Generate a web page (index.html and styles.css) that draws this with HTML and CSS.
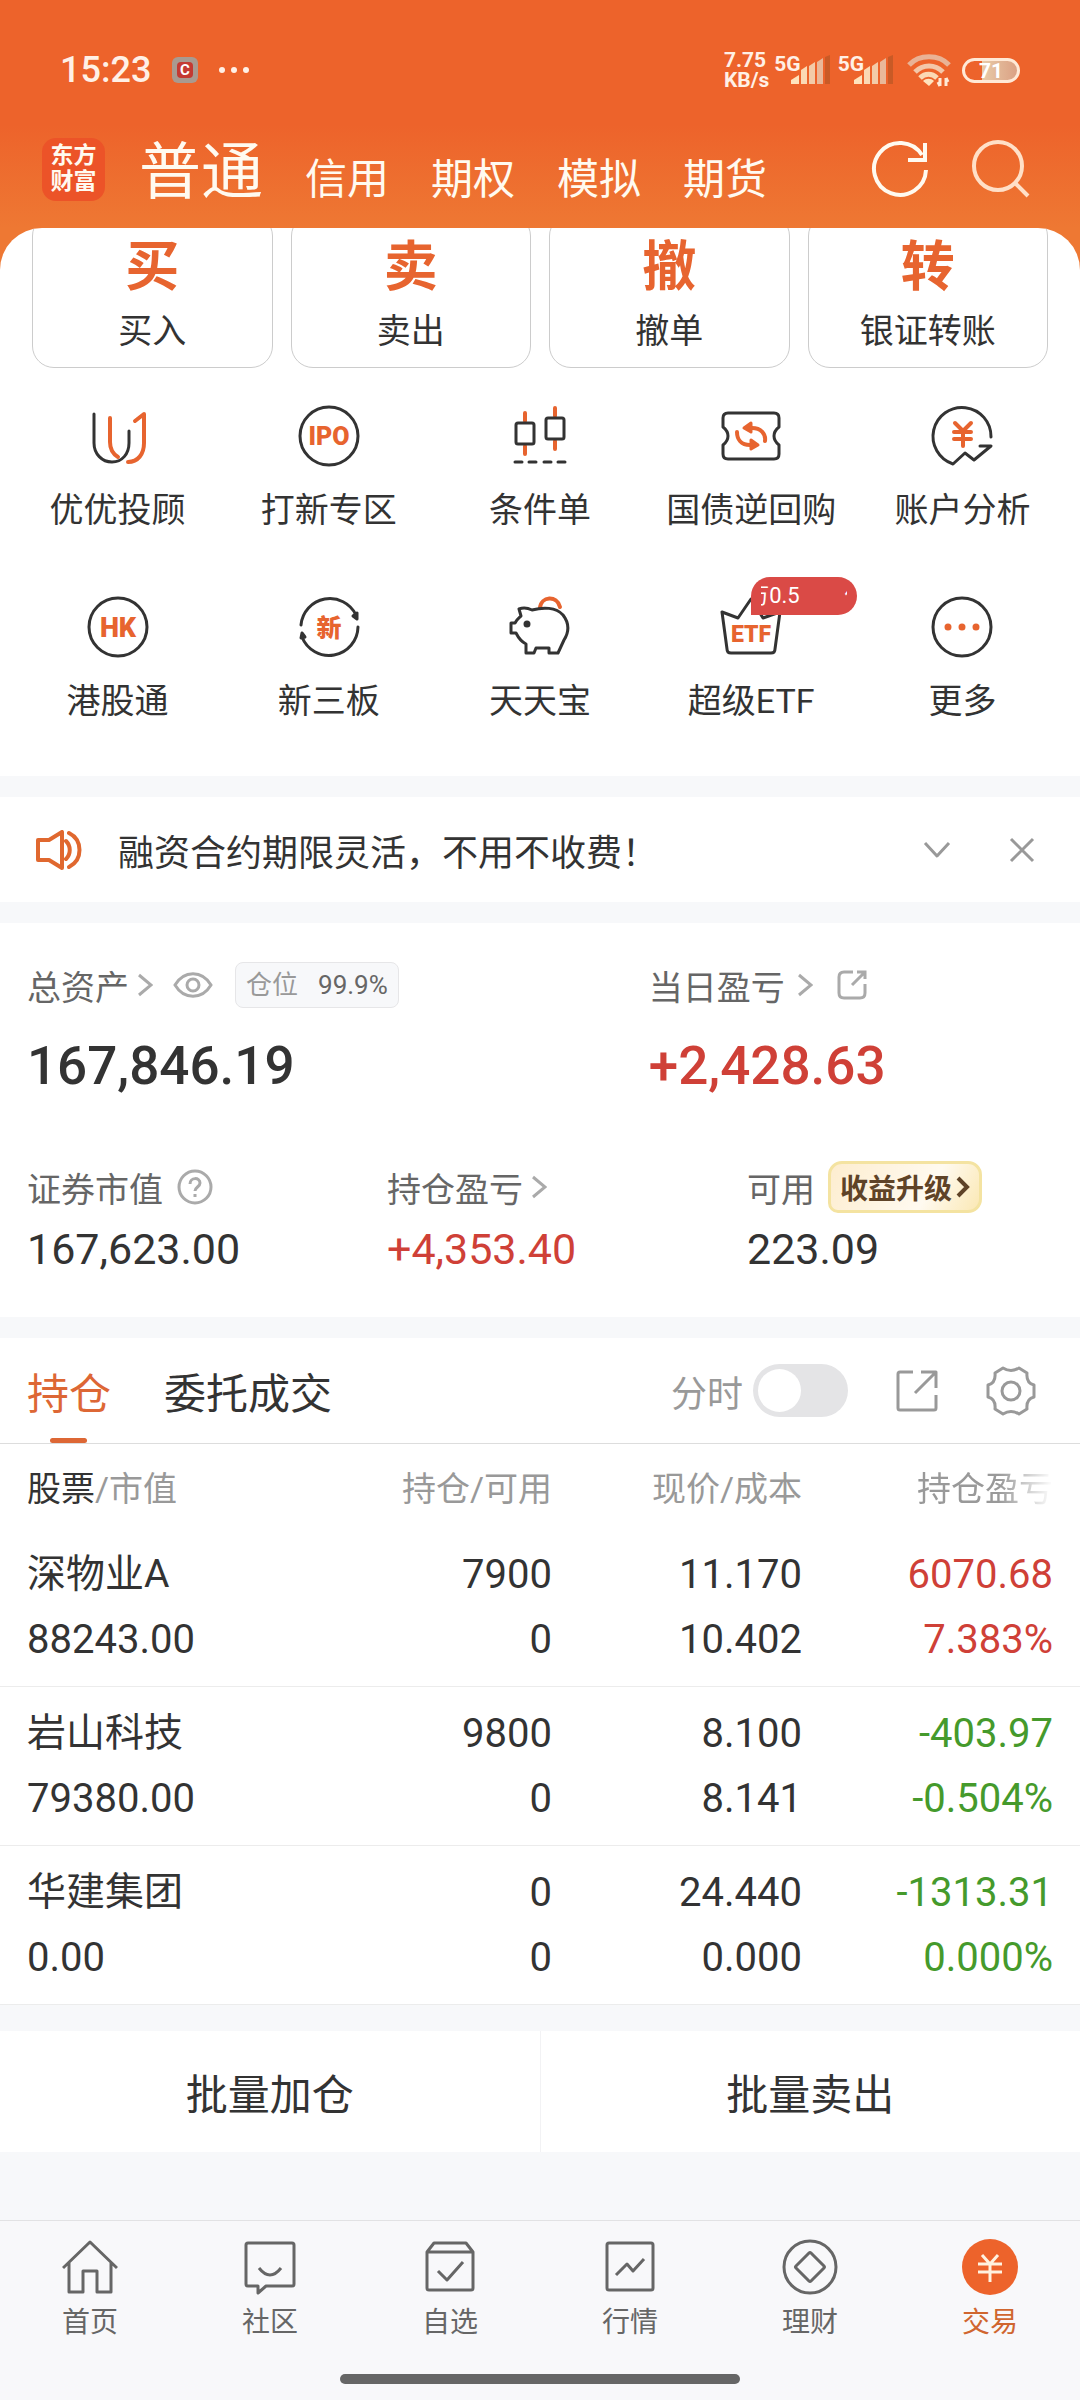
FILE: index.html
```html
<!DOCTYPE html>
<html lang="zh-CN">
<head>
    <meta charset="UTF-8">
    <meta name="viewport" content="width=device-width, initial-scale=1.0">
    <title>交易 - 东方财富</title>
    <link rel="stylesheet" href="styles.css">
</head>
<body>

    <div class="hero">
        <!-- Status bar -->
        <div class="status-bar">
            <span class="clock">15:23</span>
            <span class="app-chip"><span>C</span></span>
            <svg class="dots" width="32" height="8" viewBox="0 0 32 8" fill="#fff0e6"><circle cx="4" cy="4" r="3"/><circle cx="16" cy="4" r="3"/><circle cx="28" cy="4" r="3"/></svg>
            <div class="status-right">
                <span class="speed">7.75<br>KB/s</span>
                <span class="signal">
                    <b>5G</b>
                    <svg width="40" height="30" viewBox="0 0 40 30"><path d="M0 29v-4l8-5v9z" fill="#ffe3bd"/><path d="M10 29V15l6-4v18z" fill="#fbd9b4"/><path d="M18 29V11l6-4v22z" fill="#f3cba8"/><path d="M26 29V7l6-4v26z" fill="#e9b899"/><path d="M34 29V2l5-2v29z" fill="#c95a26"/></svg>
                </span>
                <span class="signal">
                    <b>5G</b>
                    <svg width="40" height="30" viewBox="0 0 40 30"><path d="M0 29v-4l8-5v9z" fill="#ffe3bd"/><path d="M10 29V15l6-4v18z" fill="#fbd9b4"/><path d="M18 29V11l6-4v22z" fill="#f3cba8"/><path d="M26 29V7l6-4v26z" fill="#e9b899"/><path d="M34 29V2l5-2v29z" fill="#c95a26"/></svg>
                </span>
                <svg class="wifi" width="44" height="34" viewBox="0 0 44 34" fill="none" stroke-width="5"><path d="M2 12C12 1 32 1 42 12" stroke="#e9b295"/><path d="M8 19c8-8 20-8 28 0" stroke="#f3c7a9"/><path d="M13 25c5-5 12-5 17 0" stroke="#fbd9b4"/><path d="M16 28c3-3 8-3 11 0l-5 5z" fill="#ffe3bd"/><path d="M33 25v8M31 29l2 4M39 33v-8M41 29l-2-4" stroke="#ffe9d6" stroke-width="3"/></svg>
                <span class="battery">71</span>
            </div>
        </div>

        <!-- Header -->
        <header class="header">
            <a class="logo" href="#">东方<br>财富</a>
            <nav class="modes">
                <a class="mode active" href="#">普通</a>
                <a class="mode" href="#">信用</a>
                <a class="mode" href="#">期权</a>
                <a class="mode" href="#">模拟</a>
                <a class="mode" href="#">期货</a>
            </nav>
            <button class="icon-btn" aria-label="刷新">
                <svg width="60" height="60" viewBox="0 0 60 60" fill="none" stroke="#fffaf0" stroke-width="4"><path d="M56 31A26 26 0 1 1 52 16"/><path d="M55 4v17H38"/></svg>
            </button>
            <button class="icon-btn" aria-label="搜索">
                <svg width="60" height="60" viewBox="0 0 60 60" fill="none" stroke="#ffe0c8" stroke-width="4"><circle cx="28" cy="27" r="24"/><path d="M45 44l13 13"/></svg>
            </button>
        </header>

        <div class="panel">
            <div class="cards">
                <button class="card"><b>买</b>买入</button>
                <button class="card"><b>卖</b>卖出</button>
                <button class="card"><b>撤</b>撤单</button>
                <button class="card"><b>转</b>银证转账</button>
            </div>

            <div class="tools">
                <a class="tool" href="#">
                    <svg viewBox="0 0 66 66"><path d="M9 11V40c0 11 8 19 18 19s17-8 17-19V28"/><path class="o" d="M25 15V39c0 8 3 12 8 15M43 59c10 0 16-8 16-19V11L50 18"/></svg>
                    优优投顾
                </a>
                <a class="tool" href="#">
                    <svg viewBox="0 0 66 66"><circle cx="33" cy="33" r="29"/><text x="33" y="42">IPO</text></svg>
                    打新专区
                </a>
                <a class="tool" href="#">
                    <svg viewBox="0 0 66 66"><path class="o" d="M18 10v8M18 43v8M48 5v8M48 38v8"/><rect x="9" y="20" width="18" height="21" rx="2"/><rect x="39" y="15" width="18" height="21" rx="2"/><path d="M8 59h7M22 59h7M37 59h7M51 59h7"/></svg>
                    条件单
                </a>
                <a class="tool" href="#">
                    <svg viewBox="0 0 66 66"><path d="M10 10H56q5 0 5 5V24q-5 4-5 9t5 9V51q0 5-5 5H10q-5 0-5-5V42q5-4 5-9t-5-9V15q0-5 5-5z"/><path class="o" d="M30 25h4c9 0 14 6 13 13M36 42h-4c-9 0-13-6-13-13"/><path class="of" d="M26 25l7-5v9zM40 42l-7-5v9z"/></svg>
                    国债逆回购
                </a>
                <a class="tool" href="#">
                    <svg viewBox="0 0 66 66"><path d="M62 34A29 29 0 1 0 24 61L36 50l9 7L62 43H51"/><path class="o" d="M26 20l8 8 8-8M34 28v15M25 29h17M25 36h17"/></svg>
                    账户分析
                </a>
                <a class="tool" href="#">
                    <svg viewBox="0 0 66 66"><circle cx="33" cy="33" r="29"/><text class="big" x="33" y="43">HK</text></svg>
                    港股通
                </a>
                <a class="tool" href="#">
                    <svg viewBox="0 0 66 66"><path d="M5 31A29 29 0 0 1 60 21M62 33A29 29 0 0 1 6 43"/><path class="df" d="M57 22l4-3v6zM5 44l1-5 3 4z"/><text x="33" y="43">新</text></svg>
                    新三板
                </a>
                <a class="tool" href="#">
                    <svg viewBox="0 0 66 66"><path class="o" d="M33 14C34 2 50 1 53 13"/><path d="M12 15c5-2 9-1 13 1 11-3 24-3 31 5 7 9 6 17 1 25l-6 13H42v-5H29l-2 5h-8v-9C13 47 11 43 9 39H4V29H8c2-4 4-5 6-7z"/><circle class="df" cx="20" cy="30" r="2"/></svg>
                    天天宝
                </a>
                <a class="tool" href="#">
                    <svg viewBox="0 0 66 66"><path d="M4 18l16 6L33 5l12 19 17-6-5 37q0 4-4 4H13q-4 0-4-4z"/><text class="small" x="33" y="48">ETF</text></svg>
                    <span class="badge"><span class="marquee"><span>万0.5</span><span>佣</span></span></span>
                    超级ETF
                </a>
                <a class="tool" href="#">
                    <svg viewBox="0 0 66 66"><circle cx="33" cy="33" r="29"/><g class="of"><circle cx="19" cy="33" r="2"/><circle cx="33" cy="33" r="2"/><circle cx="47" cy="33" r="2"/></g></svg>
                    更多
                </a>
            </div>
        </div>
    </div>

    <!-- Notice -->
    <div class="notice">
        <svg width="46" height="40" viewBox="0 0 46 40" fill="none" stroke="#e0682f" stroke-width="4" stroke-linejoin="round" stroke-linecap="round"><path d="M2 10h11L26 2v36L13 30H2zM30 11c5 5 5 13 0 18M33 3c14 7 14 27 0 34"/></svg>
        <p>融资合约期限灵活，不用不收费！</p>
        <button class="icon-btn" aria-label="展开"><svg width="28" height="28" viewBox="0 0 28 28" class="line-grey"><path d="M2 7l12 13L26 7"/></svg></button>
        <button class="icon-btn" aria-label="关闭"><svg width="28" height="28" viewBox="0 0 28 28" class="line-grey"><path d="M3 3l22 22M25 3L3 25"/></svg></button>
    </div>

    <!-- Assets -->
    <section class="assets">
        <div class="assets-main">
            <div>
                <div class="label">
                    总资产
                    <svg class="chev" width="16" height="24" viewBox="0 0 16 24"><path d="M2 2l12 10L2 22"/></svg>
                    <svg class="eye" width="40" height="28" viewBox="0 0 40 28"><path d="M2 14C11-1 29-1 38 14 29 29 11 29 2 14z"/><circle cx="20" cy="14" r="6"/></svg>
                    <span class="ratio">仓位<span>99.9%</span></span>
                </div>
                <div class="amount">167,846.19</div>
            </div>
            <div>
                <div class="label">
                    当日盈亏
                    <svg class="chev wide" width="16" height="24" viewBox="0 0 16 24"><path d="M2 2l12 10L2 22"/></svg>
                    <svg class="share" width="30" height="30" viewBox="0 0 30 30"><path d="M16 2H7Q2 2 2 7V23q0 5 5 5H23q5 0 5-5V14M20 2h8v7M28 2L15 15"/></svg>
                </div>
                <div class="amount up">+2,428.63</div>
            </div>
        </div>
        <div class="assets-sub">
            <div>
                <div class="label">
                    证券市值
                    <svg class="help" width="36" height="36" viewBox="0 0 36 36"><circle cx="18" cy="18" r="16"/><path d="M13 15c0-7 10-7 10-1 0 4-5 4-5 8M18 25v3"/></svg>
                </div>
                <div class="value">167,623.00</div>
            </div>
            <div>
                <div class="label">
                    持仓盈亏
                    <svg class="chev" width="16" height="24" viewBox="0 0 16 24"><path d="M2 2l12 10L2 22"/></svg>
                </div>
                <div class="value up">+4,353.40</div>
            </div>
            <div>
                <div class="label">
                    可用
                    <button class="upgrade">收益升级<svg width="14" height="22" viewBox="0 0 14 22"><path d="M2 2l9 9-9 9"/></svg></button>
                </div>
                <div class="value">223.09</div>
            </div>
        </div>
    </section>

    <!-- Holdings -->
    <section class="holdings">
        <div class="tabs">
            <button class="tab active">持仓</button>
            <button class="tab">委托成交</button>
            <label class="switch">分时<input type="checkbox"></label>
            <button class="icon-btn" aria-label="分享"><svg width="42" height="42" viewBox="0 0 42 42" class="line-grey"><path d="M17 2H4Q2 2 2 4V38q0 2 2 2H38q2 0 2-2V25M25 2h15v16M40 2L19 23"/></svg></button>
            <button class="icon-btn" aria-label="设置"><svg width="50" height="50" viewBox="0 0 50 50" class="line-grey"><path d="M17 2q8 5 16 0l8 5q-1 10 7 12v12q-8 2-7 12l-8 5q-8-5-16 0l-8-5q1-10-7-12V19q8-2 7-12z"/><circle cx="25" cy="25" r="9"/></svg></button>
        </div>
        <table>
            <thead>
                <tr>
                    <th><b>股票</b>/市值</th>
                    <th>持仓/可用</th>
                    <th>现价/成本</th>
                    <th><span class="fade">持仓盈亏</span></th>
                </tr>
            </thead>
            <tbody>
                <tr>
                    <td><span class="name">深物业A</span><span>88243.00</span></td>
                    <td><span>7900</span><span>0</span></td>
                    <td><span>11.170</span><span>10.402</span></td>
                    <td class="up"><span>6070.68</span><span>7.383%</span></td>
                </tr>
                <tr>
                    <td><span class="name">岩山科技</span><span>79380.00</span></td>
                    <td><span>9800</span><span>0</span></td>
                    <td><span>8.100</span><span>8.141</span></td>
                    <td class="down"><span>-403.97</span><span>-0.504%</span></td>
                </tr>
                <tr>
                    <td><span class="name">华建集团</span><span>0.00</span></td>
                    <td><span>0</span><span>0</span></td>
                    <td><span>24.440</span><span>0.000</span></td>
                    <td class="down"><span>-1313.31</span><span>0.000%</span></td>
                </tr>
            </tbody>
        </table>
    </section>

    <div class="batch">
        <button>批量加仓</button>
        <button>批量卖出</button>
    </div>

    <!-- Bottom navigation -->
    <footer class="tabbar">
        <nav>
            <a href="#"><svg viewBox="0 0 56 58"><path d="M1 29L28 3l27 26M7 24V53H21V32H35V53H49V24"/></svg>首页</a>
            <a href="#"><svg viewBox="0 0 56 58"><path d="M6 4H50q2 0 2 2V45q0 2-2 2H24l-8 7v-7H6q-2 0-2-2V6q0-2 2-2zM17 29q11 14 22 0"/></svg>社区</a>
            <a href="#"><svg viewBox="0 0 56 58"><path d="M5 13l7-9H44l7 9V49q0 2-2 2H7q-2 0-2-2zM5 13H51M16 32l9 9L41 23"/></svg>自选</a>
            <a href="#"><svg viewBox="0 0 56 58"><rect x="5" y="4" width="46" height="47" rx="2"/><path d="M14 36l11-11 6 7L42 20"/></svg>行情</a>
            <a href="#"><svg viewBox="0 0 56 58"><circle cx="28" cy="28" r="26"/><path d="M27 14q1-1 2 0l13 13q1 1 0 2L29 42q-1 1-2 0L14 29q-1-1 0-2z"/></svg>理财</a>
            <a class="active" href="#"><svg viewBox="0 0 56 58"><circle class="disc" cx="28" cy="28" r="28"/><path class="yen" d="M20 16l8 9 8-9M28 25v18M16 25h24M16 33h24"/></svg>交易</a>
        </nav>
        <div class="home-bar"></div>
    </footer>

</body>
</html>
```
FILE: styles.css
```css
* {
    box-sizing: border-box;
}

body {
    margin: 0;
    min-height: 100vh;
    display: flex;
    flex-direction: column;
    font-family: Roboto, "Noto Sans CJK SC", sans-serif;
    color: #333;
    background-color: #f7f8fa;
}

a {
    color: inherit;
    text-decoration: none;
}

button {
    font: inherit;
    color: inherit;
    background: none;
    border: none;
    padding: 0;
    cursor: pointer;
}

svg {
    flex: none;
}

.icon-btn {
    display: flex;
}

.up {
    color: #cf4037;
}

.down {
    color: #459a2c;
}

.line-grey {
    fill: none;
    stroke: #999;
    stroke-width: 3;
    stroke-linejoin: round;
}

/* --- Status bar --- */
.hero {
    background: linear-gradient(#ed632b 125px, #ee7833 228px);
}

.status-bar {
    display: flex;
    align-items: center;
    height: 124px;
    padding: 16px 60px 0;
    color: #fff0e6;
}

.clock {
    font-size: 36px;
    font-weight: 500;
    width: 112px;
}

.app-chip {
    width: 26px;
    height: 26px;
    padding: 5px;
    border-radius: 6px;
    background-color: #a99a90;
    margin-right: 20px;
}

.app-chip span {
    display: block;
    border-radius: 4px;
    background-color: #c43a32;
    color: #fff;
    font-size: 15px;
    font-weight: bold;
    line-height: 16px;
    text-align: center;
}

.status-right {
    display: flex;
    align-items: center;
    margin-left: auto;
}

.speed {
    font-size: 21px;
    line-height: 20px;
    font-weight: bold;
    margin-right: 5px;
}

.signal {
    display: flex;
    font-size: 21px;
    line-height: 18px;
    margin-right: 7px;
}

.signal svg {
    margin-left: -10px;
}

.wifi {
    margin: 0 11px 0 6px;
}

.battery {
    width: 58px;
    height: 25px;
    border: 3px solid #ffe9d6;
    border-radius: 13px;
    padding-left: 14px;
    font-size: 21px;
    line-height: 20px;
    font-weight: bold;
    color: #fff;
    background: linear-gradient(to right, transparent 32%, #e8cba8 32%, #dba184);
}

/* --- Header --- */
.header {
    display: flex;
    align-items: center;
    height: 104px;
    padding: 0 50px 14px 42px;
    color: #fffaf0;
}

.header .icon-btn + .icon-btn {
    margin-left: 40px;
}

.logo {
    width: 63px;
    height: 63px;
    padding: 5px 0;
    border-radius: 14px;
    background-color: #ec5328;
    font-size: 23px;
    line-height: 26px;
    font-weight: bold;
    text-align: center;
}

.modes {
    flex: 1;
    display: flex;
    align-items: baseline;
    gap: 42px;
    margin-left: 34px;
    padding-top: 14px;
    font-size: 42px;
    line-height: 72px;
}

.mode.active {
    font-size: 62px;
}

/* --- Trade cards --- */
.panel {
    overflow: hidden;
    background-color: #fff;
    border-radius: 42px 42px 0 0;
}

.cards {
    display: grid;
    grid-template-columns: repeat(4, 1fr);
    gap: 18px;
    margin-top: -14px;
    padding: 0 32px;
}

.card {
    display: flex;
    flex-direction: column;
    align-items: center;
    height: 154px;
    padding-top: 20px;
    border: 1px solid #ccc;
    border-radius: 22px;
    font-size: 34px;
    line-height: 48px;
}

.card b {
    color: #e7642f;
    font-size: 54px;
    line-height: 66px;
    margin-bottom: 6px;
}

/* --- Tool grid --- */
.tools {
    display: grid;
    grid-template-columns: repeat(5, 1fr);
    row-gap: 60px;
    padding: 35px 12px 51px;
}

.tool {
    position: relative;
    display: flex;
    flex-direction: column;
    align-items: center;
    font-size: 34px;
    line-height: 48px;
    white-space: nowrap;
}

.tool svg {
    width: 66px;
    height: 66px;
    margin-bottom: 17px;
    fill: none;
    stroke: #333;
    stroke-width: 3;
    stroke-linecap: round;
    stroke-linejoin: round;
}

.tool .o {
    stroke: #e7642f;
    stroke-width: 4;
}

.tool .of {
    fill: #e7642f;
    stroke: #e7642f;
}

.tool .df {
    fill: #333;
}

.tool text {
    fill: #e7642f;
    stroke: none;
    font-size: 25px;
    font-weight: 900;
    text-anchor: middle;
}

.tool .big {
    font-size: 27px;
}

.tool .small {
    font-size: 23px;
}

.badge {
    position: absolute;
    left: 50%;
    top: -17px;
    width: 106px;
    height: 38px;
    padding: 0 10px;
    border-radius: 19px 19px 19px 0;
    background-color: #da4a46;
    color: #fff;
    font-size: 22px;
    line-height: 38px;
}

.marquee {
    display: flex;
    gap: 45px;
    overflow: hidden;
    text-indent: -14px;
}

.marquee span + span {
    text-indent: 0;
}

/* --- Notice --- */
.notice {
    display: flex;
    align-items: center;
    height: 105px;
    margin: 21px 0;
    padding: 0 44px 0 36px;
    background-color: #fff;
}

.notice p {
    flex: 1;
    margin: 0 0 0 36px;
    font-size: 36px;
}

.notice .icon-btn + .icon-btn {
    margin-left: 57px;
}

/* --- Assets --- */
.assets {
    padding: 34px 0 43px;
    margin-bottom: 21px;
    background-color: #fff;
}

.assets-main,
.assets-sub {
    display: grid;
    grid-template-columns: 19fr 14fr;
}

.assets-sub {
    grid-template-columns: repeat(3, 1fr);
    margin-top: 58px;
}

.assets-main > div,
.assets-sub > div {
    padding-left: 27px;
}

.label {
    display: flex;
    align-items: center;
    height: 56px;
    font-size: 34px;
    color: #666;
}

.label svg {
    fill: none;
    stroke: #aaa;
    stroke-width: 3;
}

.label .chev {
    margin-left: 8px;
}

.label .wide {
    margin-left: 12px;
}

.label .eye {
    margin: 0 22px 0 20px;
}

.label .share {
    margin-left: 24px;
}

.label .help {
    margin-left: 14px;
}

.ratio {
    display: flex;
    gap: 20px;
    height: 46px;
    padding: 0 10px;
    border: 1px solid #e6e6e8;
    border-radius: 8px;
    background-color: #f7f8fa;
    font-size: 26px;
    line-height: 44px;
    color: #999;
}

.ratio span {
    color: #666;
}

.amount {
    margin-top: 18px;
    font-size: 53px;
    line-height: 70px;
    font-weight: 500;
}

.value {
    margin-top: 9px;
    font-size: 43px;
    line-height: 50px;
}

.label .upgrade {
    display: flex;
    align-items: center;
    gap: 4px;
    height: 52px;
    padding: 0 9px;
    margin-left: 13px;
    border: 3px solid #f4e3a1;
    border-radius: 14px 14px 14px 10px;
    background: linear-gradient(120deg, #fdedcf, #fffaf0 65%, #fbe8b4);
    font-size: 28px;
    font-weight: bold;
    color: #5f4327;
}

.upgrade svg {
    stroke: #5f4327;
    stroke-width: 4;
}

/* --- Holdings --- */
.holdings {
    background-color: #fff;
}

.tabs {
    display: flex;
    align-items: center;
    height: 106px;
    padding: 0 44px 0 27px;
    border-bottom: 1px solid #ddd;
}

.tab {
    position: relative;
    height: 100%;
    margin-right: 53px;
    font-size: 42px;
}

.tab.active {
    color: #dd6735;
}

.tab.active::after {
    content: "";
    position: absolute;
    left: 50%;
    bottom: 0;
    width: 37px;
    height: 5px;
    margin-left: -19px;
    border-radius: 3px;
    background-color: #dd6735;
}

.tabs .icon-btn {
    margin-left: 48px;
}

.switch {
    display: flex;
    align-items: center;
    gap: 10px;
    margin-left: auto;
    font-size: 36px;
    color: #999;
}

.switch input {
    appearance: none;
    width: 95px;
    height: 53px;
    margin: 0;
    padding: 5px;
    border-radius: 27px;
    background-color: #e4e4e6;
}

.switch input::before {
    content: "";
    display: block;
    width: 43px;
    height: 43px;
    border-radius: 50%;
    background-color: #fff;
}

.switch input:checked {
    background-color: #e7642f;
}

.switch input:checked::before {
    margin-left: auto;
}

table {
    width: 100%;
    table-layout: fixed;
    border-collapse: collapse;
}

th {
    width: 250px;
    height: 84px;
    padding: 0;
    font-size: 34px;
    font-weight: normal;
    text-align: right;
    color: #999;
}

th b {
    font-weight: normal;
    color: #333;
}

th:first-child {
    width: auto;
}

th:last-child {
    width: 278px;
}

td {
    padding: 14px 0;
    border-bottom: 1px solid #ececec;
    font-size: 40px;
    line-height: 65px;
    text-align: right;
}

td span {
    display: block;
}

td .name {
    font-size: 39px;
}

th:first-child,
td:first-child {
    padding-left: 27px;
    text-align: left;
}

th:last-child,
td:last-child {
    padding-right: 27px;
}

.fade {
    -webkit-mask-image: linear-gradient(to right, #000 60%, transparent);
    mask-image: linear-gradient(to right, #000 60%, transparent);
}

/* --- Batch buttons --- */
.batch {
    display: flex;
    margin: 26px 0;
    background-color: #fff;
}

.batch button {
    flex: 1;
    height: 121px;
    font-size: 42px;
}

.batch button + button {
    border-left: 1px solid #f2f2f4;
}

/* --- Bottom tab bar --- */
.tabbar {
    margin-top: auto;
    padding: 18px 0 16px;
    border-top: 1px solid #e2e2e4;
    background-color: #f8f8fa;
}

.tabbar nav {
    display: flex;
}

.tabbar a {
    flex: 1;
    display: flex;
    flex-direction: column;
    align-items: center;
    font-size: 28px;
    line-height: 40px;
    color: #666;
}

.tabbar svg {
    width: 56px;
    height: 58px;
    margin-bottom: 6px;
    fill: none;
    stroke: #666;
    stroke-width: 3;
    stroke-linejoin: round;
}

.tabbar a.active {
    color: #d0662f;
}

.tabbar .disc {
    fill: #ed632b;
    stroke: none;
}

.tabbar .yen {
    stroke: #fff2e0;
}

.home-bar {
    width: 37%;
    height: 10px;
    margin: 31px auto 0;
    border-radius: 5px;
    background-color: #666;
}
```
